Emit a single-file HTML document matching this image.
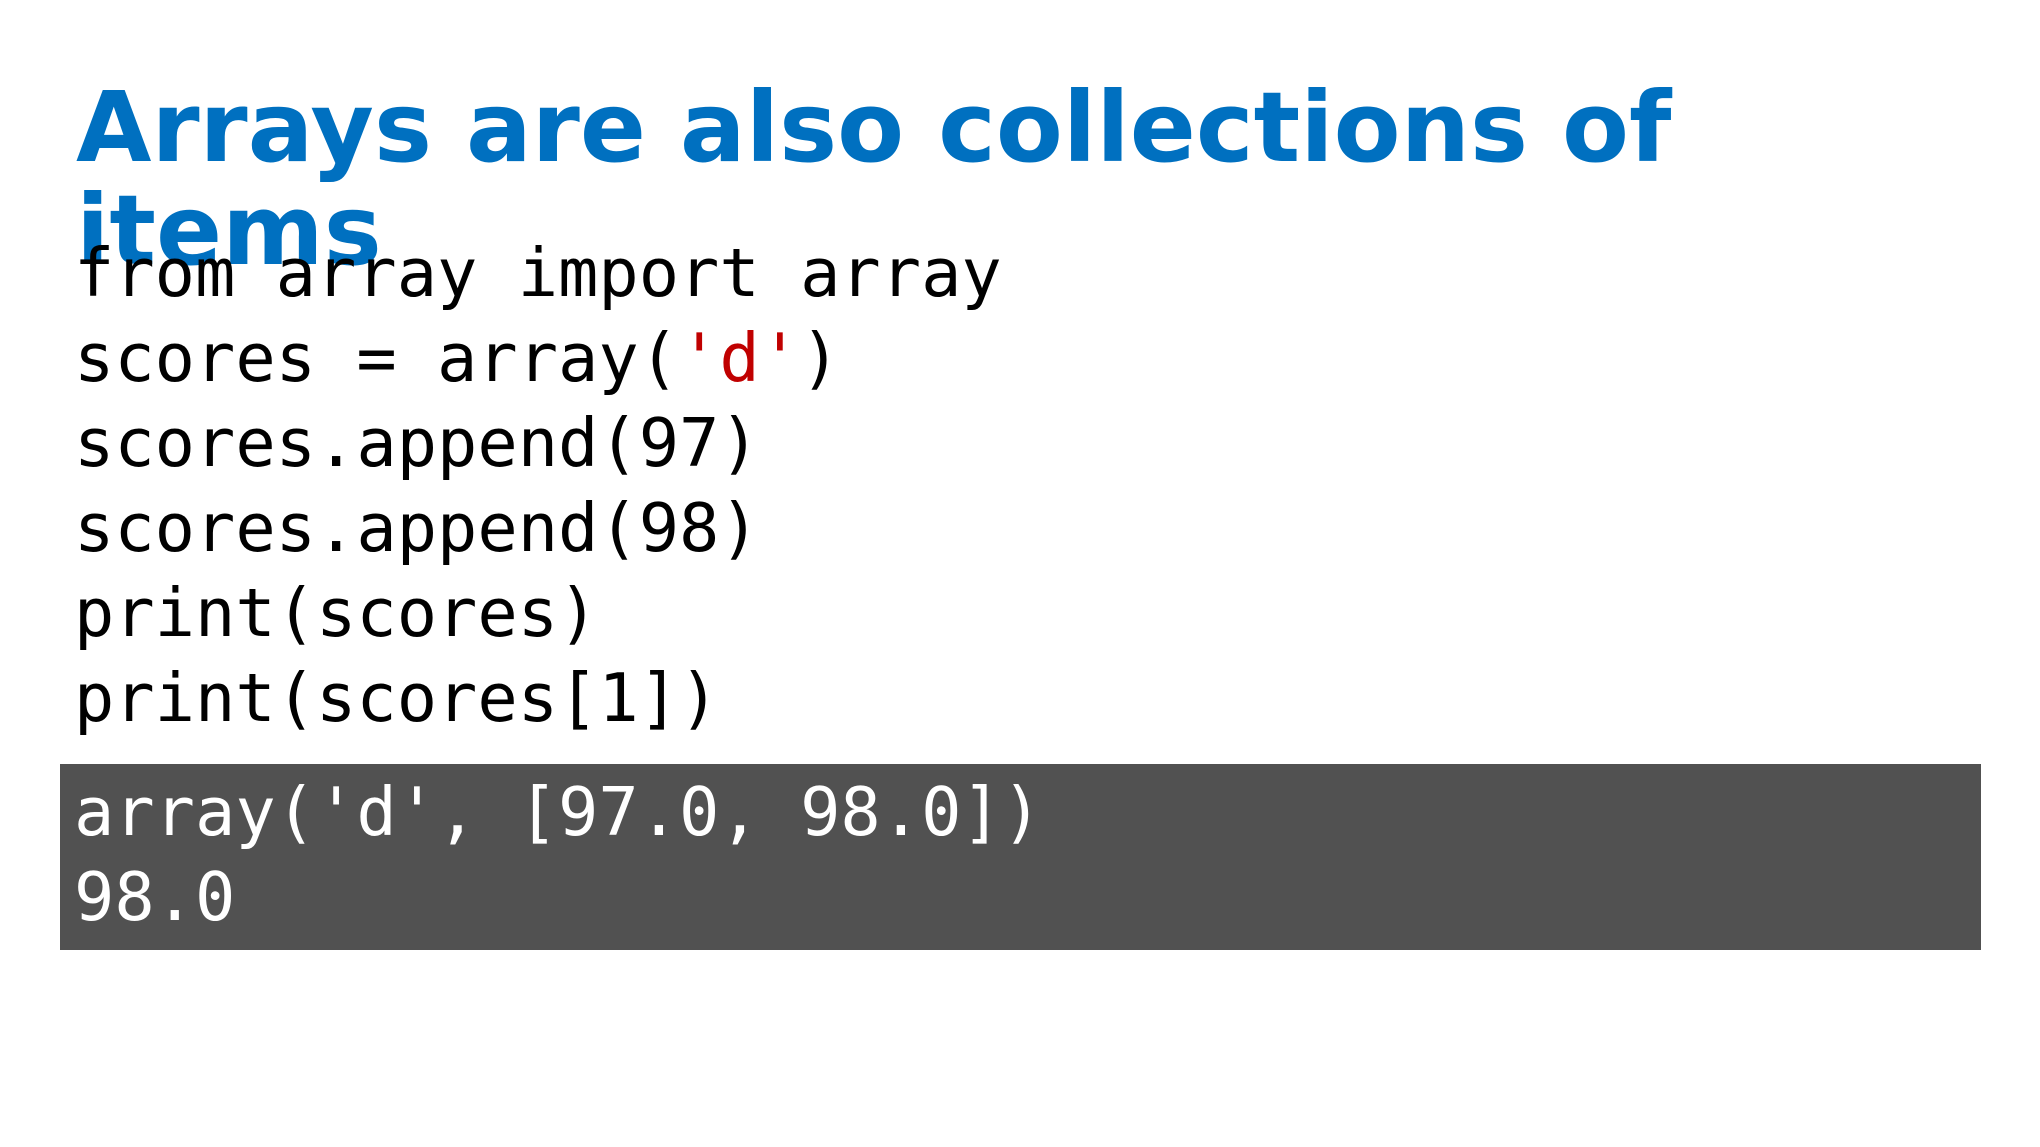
<!DOCTYPE html>
<html><head><meta charset="utf-8"><style>
html,body{margin:0;padding:0;background:#fff;width:2040px;height:1147px;overflow:hidden;position:relative}
.t{position:absolute;left:76px;top:76px;font-family:"DejaVu Sans","Liberation Sans",sans-serif;font-weight:bold;font-size:97.5px;line-height:103px;color:#0070c0;white-space:nowrap}
.c{position:absolute;left:74px;font-family:"DejaVu Sans Mono","Liberation Mono",monospace;font-size:67px;line-height:85px;white-space:pre}
.box{position:absolute;left:60px;top:764px;width:1921px;height:186px;background:#515151}
</style></head><body>
<div class="t">Arrays are also collections of<br>items</div>
<div class="c" style="top:231px;color:#000">from array import array
scores = array(<span style="color:#c00000">'d'</span>)
scores.append(97)
scores.append(98)
print(scores)
print(scores[1])</div>
<div class="box"></div>
<div class="c" style="top:770px;color:#fff">array('d', [97.0, 98.0])
98.0</div>
</body></html>
